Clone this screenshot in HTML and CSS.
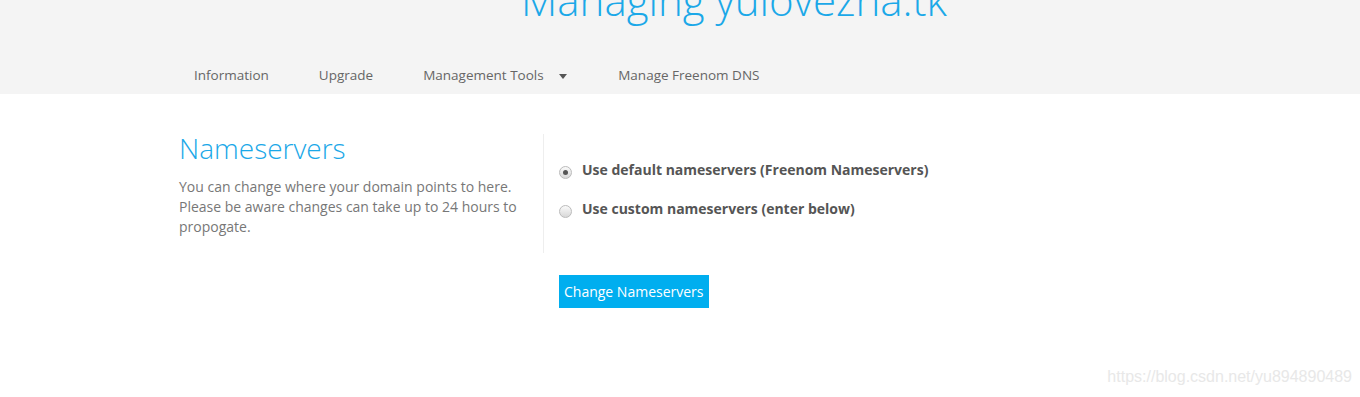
FILE: index.html
```html
<!DOCTYPE html>
<html lang="en">
<head>
  <meta charset="UTF-8">
  <title>Managing yulovezha.tk</title>
  <link rel="stylesheet" href="styles.css">
</head>
<body>
  <div class="page-header">
    <h1 class="domain-title">Managing yulovezha.tk</h1>
    <ul class="domain-nav">
      <li>Information</li>
      <li>Upgrade</li>
      <li class="dropdown">Management Tools <span class="caret"></span></li>
      <li>Manage Freenom DNS</li>
    </ul>
  </div>

  <div class="content">
    <div class="ns-row">
      <div class="ns-intro">
        <h2>Nameservers</h2>
        <p>You can change where your domain points to here.<br>Please be aware changes can take up to 24 hours to propogate.</p>
      </div>
      <div class="ns-options">
        <label class="radio-line"><span class="radio checked"></span>Use default nameservers (Freenom Nameservers)</label>
        <label class="radio-line"><span class="radio"></span>Use custom nameservers (enter below)</label>
      </div>
    </div>
    <div class="ns-actions">
      <button type="button" class="primary">Change Nameservers</button>
    </div>
  </div>

  <div class="watermark">https://blog.csdn.net/yu894890489</div>
</body>
</html>
```

FILE: styles.css
```css
html, body {
  margin: 0;
  padding: 0;
}
body {
  font-family: "Open Sans", "Liberation Sans", sans-serif;
  background: #fff;
  color: #666;
  font-size: 14px;
  height: 397px;
  overflow: hidden;
  position: relative;
}

/* header strip */
.page-header {
  background: #f4f4f4;
  height: 94px;
  overflow: hidden;
}
.domain-title {
  margin: -24px 0 0 0;
  padding-left: 108px;
  text-align: center;
  font-size: 42px;
  font-weight: 300;
  color: #1ba8e8;
  line-height: 48px;
  height: 42px;
}
.domain-nav {
  list-style: none;
  margin: 41px auto 0 auto;
  padding: 0 0 0 15px;
  width: 987px;
  display: flex;
  gap: 50px;
}
.domain-nav li {
  font-size: 13.5px;
  color: #666;
  line-height: 32px;
}
.caret {
  display: inline-block;
  width: 0;
  height: 0;
  margin: 0 1px 0 12px;
  vertical-align: middle;
  border-left: 4px solid transparent;
  border-right: 4px solid transparent;
  border-top: 5px solid #555;
}

/* nameserver block */
.content {
  width: 1002px;
  margin: 0 auto;
  padding-top: 40px;
}
.ns-row {
  display: flex;
}
.ns-intro {
  width: 364px;
  border-right: 1px solid #eee;
  padding-bottom: 16px;
}
.ns-intro h2 {
  margin: -3px 0 0 0;
  font-size: 28px;
  font-weight: 300;
  color: #1ba8e8;
  line-height: 34px;
}
.ns-intro p {
  margin: 12px 0 0 0;
  line-height: 20px;
  color: #777;
  width: 340px;
}
.ns-options {
  padding: 26px 0 0 15px;
  display: flex;
  flex-direction: column;
  gap: 19px;
}
.radio-line {
  display: flex;
  align-items: center;
  font-weight: bold;
  color: #555;
  line-height: 20px;
}
.radio {
  width: 11px;
  height: 11px;
  border: 1px solid #bbb;
  border-radius: 50%;
  background: linear-gradient(#fafafa, #d8d8d8);
  margin: 5px 10px 0 0;
  position: relative;
}
.radio.checked::after {
  content: "";
  position: absolute;
  left: 3px;
  top: 3px;
  width: 5px;
  height: 5px;
  border-radius: 50%;
  background: #555;
}
.ns-actions {
  padding: 22px 0 0 380px;
}
button.primary {
  background: #00aeef;
  color: #fff;
  border: none;
  border-radius: 0;
  font-family: "Open Sans", "Liberation Sans", sans-serif;
  font-size: 14px;
  height: 33px;
  padding: 0 5px;
}

.watermark {
  position: absolute;
  right: 8px;
  top: 368px;
  font-family: "Liberation Sans", Arial, sans-serif;
  font-size: 16px;
  color: #e8e8e8;
}
```
